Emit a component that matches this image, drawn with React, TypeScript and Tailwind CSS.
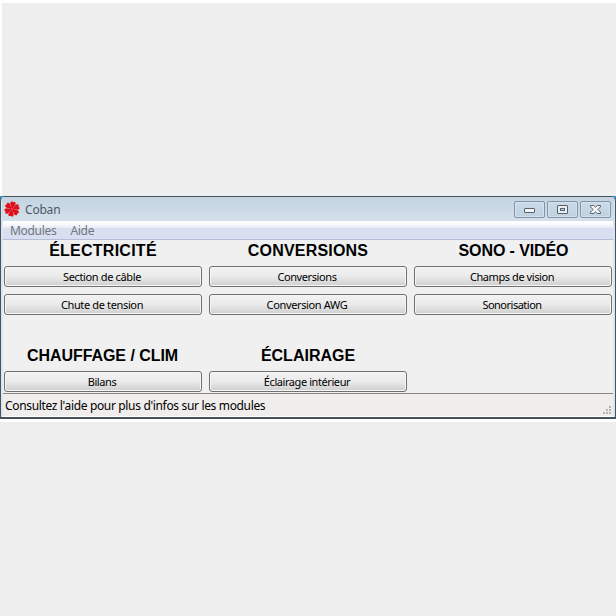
import type { ReactNode } from 'react';

type ModuleButton = { label: string; spacing: string };

type Group = {
  title: string;
  titleSpacing: string;
  modules: ModuleButton[];
};

const topGroups: Group[] = [
  {
    title: 'ÉLECTRICITÉ',
    titleSpacing: 'tracking-[0.25px]',
    modules: [
      { label: 'Section de câble', spacing: 'tracking-[-0.36px]' },
      { label: 'Chute de tension', spacing: 'tracking-[-0.36px]' },
    ],
  },
  {
    title: 'CONVERSIONS',
    titleSpacing: 'tracking-[0.2px]',
    modules: [
      { label: 'Conversions', spacing: 'tracking-[-0.4px]' },
      { label: 'Conversion AWG', spacing: 'tracking-[-0.36px]' },
    ],
  },
  {
    title: 'SONO - VIDÉO',
    titleSpacing: 'tracking-[-0.1px] pl-px',
    modules: [
      { label: 'Champs de vision', spacing: 'tracking-[-0.42px]' },
      { label: 'Sonorisation', spacing: 'tracking-[-0.5px]' },
    ],
  },
];

const bottomGroups: Group[] = [
  {
    title: 'CHAUFFAGE / CLIM',
    titleSpacing: 'tracking-[-0.05px] pr-px',
    modules: [{ label: 'Bilans', spacing: 'tracking-[-0.4px]' }],
  },
  {
    title: 'ÉCLAIRAGE',
    titleSpacing: 'tracking-[0px]',
    modules: [{ label: 'Éclairage intérieur', spacing: 'tracking-[-0.42px]' }],
  },
];

function Logo() {
  return (
    <svg width="16" height="16" viewBox="0 0 16 16">
      {[10, 70, 130, 190, 250, 310].map((angle) => (
        <path
          key={angle}
          d="M7.4 6.8 L5.4 3 Q4.9 0.9 6.6 0.3 L8 1.1 L9.4 0.3 Q11.1 0.9 10.6 3 L8.6 6.8 Z"
          fill="#e30d17"
          transform={`rotate(${angle} 8 8)`}
        />
      ))}
      <circle cx="8" cy="8" r="1.9" fill="#e30d17" />
      <circle cx="8" cy="8" r="0.7" fill="#f0a5ac" />
    </svg>
  );
}

function CaptionButton({ children }: { children: ReactNode }) {
  return (
    <button className="flex h-[17px] w-[31px] items-center justify-center rounded-[2px] border border-[#8294a6] bg-linear-to-b from-[#cbdbe9] to-[#bfd0df] shadow-[inset_0_0_0_1px_#d5e2ed]">
      {children}
    </button>
  );
}

function GroupBox({ group }: { group: Group }) {
  return (
    <section className="w-[198px]">
      <h2
        className={`h-[26px] text-center font-['Liberation_Sans',sans-serif] text-[16px] leading-[22px] font-bold text-black ${group.titleSpacing}`}
      >
        {group.title}
      </h2>
      <div className="flex flex-col gap-[7px]">
        {group.modules.map((m) => (
          <button
            key={m.label}
            className={`h-[21px] rounded-[3px] border border-[#707070] bg-linear-to-b from-[#f2f2f2] from-0% via-[#ebebeb] via-48% to-[#cfcfcf] pr-[2px] text-center text-[11px] leading-[19px] whitespace-nowrap text-black shadow-[inset_0_0_0_1px_#f6f6f6] ${m.spacing}`}
          >
            {m.label}
          </button>
        ))}
      </div>
    </section>
  );
}

export default function App() {
  return (
    <div className="flex h-[616px] w-[616px] flex-col overflow-hidden bg-white font-['Noto_Sans',sans-serif]">
      <div className="mt-[3px] ml-[2px] h-[193px] bg-[#eeeeee]" />

      <div className="h-[223px] bg-[#3295cc]">
        <main className="flex h-[223px] flex-col rounded-t-[5px] border-t border-r border-b-2 border-l border-[#46525e] bg-[#dce6ef] px-px">
          <header className="flex h-[24px] items-center bg-linear-to-b from-[#c3d3e0] to-[#d4e1ed] pr-[3px] pl-[2px]">
            <Logo />
            <h1 className="ml-[5px] flex-1 pt-px text-[12px] leading-4 tracking-[-0.2px] text-[#4d5964]">Coban</h1>
            <div className="flex gap-[2px]">
              <CaptionButton>
                <svg className="mt-[2px]" width="11" height="6" viewBox="0 0 11 6">
                  <rect x="0.5" y="1.5" width="10" height="4" rx="0.5" fill="#f3f5f7" stroke="#56606b" />
                </svg>
              </CaptionButton>
              <CaptionButton>
                <svg width="11" height="9" viewBox="0 0 11 9">
                  <rect x="0.5" y="0.5" width="10" height="8" rx="0.5" fill="#e9eef3" stroke="#56606b" />
                  <rect x="3.5" y="3.5" width="4" height="2" fill="#c2d2df" stroke="#56606b" />
                </svg>
              </CaptionButton>
              <CaptionButton>
                <svg width="11" height="9" viewBox="0 0 11 9">
                  <path
                    d="M0.5 0.5H3.7L5.5 2.2L7.3 0.5H10.5V1.8L7.9 4.5L10.5 7.2V8.5H7.3L5.5 6.8L3.7 8.5H0.5V7.2L3.1 4.5L0.5 1.8Z"
                    fill="#f3f5f7"
                    stroke="#56606b"
                  />
                </svg>
              </CaptionButton>
            </div>
          </header>

          <nav className="mx-px flex h-[19px] gap-[14px] border-b border-[#b5bdd8] bg-linear-to-b from-white from-10% via-[#e8ecf6] via-38% to-[#d7dff0] to-42% pl-[7px] text-[12px] leading-[20px] tracking-[-0.3px] text-[#74767c]">
            <span>Modules</span>
            <span>Aide</span>
          </nav>

          <div className="mx-px flex h-[153px] flex-col bg-[#f0f0f0] pl-px">
            <div className="flex h-[105px] gap-[7px]">
              {topGroups.map((g) => (
                <GroupBox key={g.title} group={g} />
              ))}
            </div>
            <div className="flex gap-[7px]">
              {bottomGroups.map((g) => (
                <GroupBox key={g.title} group={g} />
              ))}
            </div>
          </div>

          <footer className="mx-px flex h-[24px] items-end justify-between border-t border-b border-t-[#858585] border-b-white bg-[#f0eded] pl-[2px]">
            <p className="text-[12px] leading-[20px] tracking-[-0.34px] whitespace-nowrap text-black">
              Consultez l'aide pour plus d'infos sur les modules
            </p>
            <svg width="10" height="10" viewBox="0 0 10 10" fill="#b8b3b3">
              <rect x="6" y="0" width="2" height="2" />
              <rect x="3" y="3" width="2" height="2" />
              <rect x="6" y="3" width="2" height="2" />
              <rect x="0" y="6" width="2" height="2" />
              <rect x="3" y="6" width="2" height="2" />
              <rect x="6" y="6" width="2" height="2" />
            </svg>
          </footer>
        </main>
      </div>

      <div className="mt-[3px] flex-1 bg-[#eeeeee]" />
    </div>
  );
}
